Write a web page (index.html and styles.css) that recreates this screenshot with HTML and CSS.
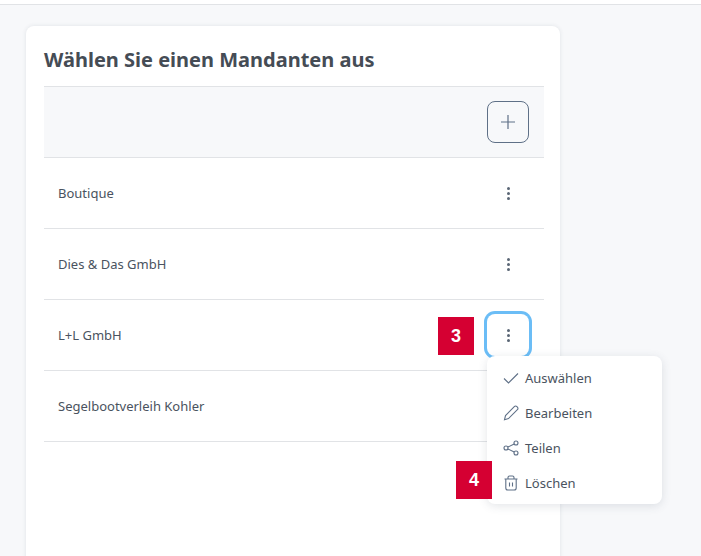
FILE: index.html
```html
<!DOCTYPE html>
<html>

<head>
    <title>Mandanten</title>
    <link rel="stylesheet" href="styles.css">
</head>

<body>
    <div class="topbar"></div>

    <div class="content">
        <div class="card">
            <h2 class="card-title">Wählen Sie einen Mandanten aus</h2>

            <div class="toolbar">
                <button class="add-btn" aria-label="Hinzufügen">
                    <svg width="16" height="16" viewBox="0 0 16 16">
                        <path d="M8 1v14M1 8h14" stroke="#5f7087" stroke-width="1.2" fill="none" />
                    </svg>
                </button>
            </div>

            <div class="row">
                <span>Boutique</span>
                <button class="more-btn" aria-label="Mehr"><i></i><i></i><i></i></button>
            </div>
            <div class="row">
                <span>Dies &amp; Das GmbH</span>
                <button class="more-btn" aria-label="Mehr"><i></i><i></i><i></i></button>
            </div>
            <div class="row row-active">
                <span>L+L GmbH</span>
                <span class="badge badge-3">3</span>
                <button class="more-btn focused" aria-label="Mehr"><i></i><i></i><i></i></button>

                <div class="menu">
                    <div class="menu-item">
                        <svg width="16" height="16" viewBox="0 0 16 16">
                            <path d="M1 8.5l4.5 4.5L15 3.5" stroke="#5f7087" stroke-width="1.1" fill="none" />
                        </svg>
                        Auswählen
                    </div>
                    <div class="menu-item">
                        <svg width="16" height="16" viewBox="0 0 16 16">
                            <path d="M11.3 1.6a1.8 1.8 0 0 1 2.6 0l.5.5a1.8 1.8 0 0 1 0 2.6L5.5 13.6 1.5 14.7l1-4.2z"
                                stroke="#5f7087" stroke-width="1.1" fill="none" />
                        </svg>
                        Bearbeiten
                    </div>
                    <div class="menu-item">
                        <svg width="16" height="16" viewBox="0 0 16 16">
                            <circle cx="3" cy="8" r="2" stroke="#5f7087" stroke-width="1.1" fill="none" />
                            <circle cx="13" cy="3" r="2" stroke="#5f7087" stroke-width="1.1" fill="none" />
                            <circle cx="13" cy="13" r="2" stroke="#5f7087" stroke-width="1.1" fill="none" />
                            <path d="M4.8 7.1l6.4-3.2M4.8 8.9l6.4 3.2" stroke="#5f7087" stroke-width="1.1" fill="none" />
                        </svg>
                        Teilen
                    </div>
                    <div class="menu-item">
                        <svg width="16" height="16" viewBox="0 0 16 16">
                            <path d="M1.5 4h13M5 4V2.5A1.5 1.5 0 0 1 6.500 1h3A1.500 1.500 0 0 1 11 2.500V4M2.800 4v9a2 2 0 0 0 2 2h6.400a2 2 0 0 0 2-2V4M6.500 7.500v4M9.500 7.500v4"
                                stroke="#5f7087" stroke-width="1.1" fill="none" />
                        </svg>
                        Löschen
                    </div>
                    <span class="badge badge-4">4</span>
                </div>
            </div>
            <div class="row">
                <span>Segelbootverleih Kohler</span>
            </div>
        </div>
    </div>
</body>

</html>
```

FILE: styles.css
```css
html,
body {
    height: 100%;
}

body {
    margin: 0;
    overflow: hidden;
    background-color: #f7f8fa;
    color: #4a5360;
    font-family: "Noto Sans", sans-serif;
    font-size: 13px;
}

.topbar {
    height: 4px;
    background-color: #fff;
    border-bottom: 1px solid #e1e3e6;
}

.content {
    padding: 21px 0 0 26px;
}

.card {
    width: 500px;
    height: 560px;
    padding: 0 16px 0 18px;
    background-color: #fff;
    border-radius: 8px 8px 0 0;
    box-shadow: 0 0 4px rgba(60, 70, 90, 0.12);
}

.card-title {
    margin: 0;
    height: 60px;
    line-height: 68px;
    font-size: 20px;
    font-weight: 700;
    color: #454c55;
}

.toolbar {
    display: flex;
    justify-content: flex-end;
    padding: 14px 15px;
    background-color: #f7f8fa;
    border-top: 1px solid #e1e3e6;
    border-bottom: 1px solid #e1e3e6;
}

.add-btn,
.more-btn {
    width: 42px;
    height: 42px;
    padding: 0;
    display: flex;
    align-items: center;
    justify-content: center;
    background: none;
    border-radius: 8px;
    cursor: pointer;
}

.add-btn {
    border: 1px solid #5f7087;
}

.more-btn {
    flex-direction: column;
    gap: 2px;
    border: none;
}

.more-btn i {
    width: 3px;
    height: 3px;
    border-radius: 50%;
    background-color: #5a6675;
}

.more-btn.focused {
    box-shadow: 0 0 0 3px #6bbdf6;
}

.row {
    position: relative;
    display: flex;
    align-items: center;
    justify-content: space-between;
    height: 70px;
    padding: 0 15px 0 14px;
    border-bottom: 1px solid #e1e3e6;
}

.badge {
    position: absolute;
    display: flex;
    align-items: center;
    justify-content: center;
    width: 36px;
    height: 38px;
    background-color: #d50032;
    color: #fff;
    font-family: "Liberation Sans", sans-serif;
    font-size: 18px;
    font-weight: 700;
}

.badge-3 {
    left: 394px;
    top: 17px;
}

.badge-4 {
    left: -31px;
    top: 105px;
}

.menu {
    position: absolute;
    z-index: 2;
    left: 443px;
    top: 56px;
    width: 175px;
    padding: 4px 0;
    background-color: #fff;
    border-radius: 8px;
    box-shadow: 0 2px 10px rgba(60, 70, 90, 0.14);
}

.menu-item {
    display: flex;
    align-items: center;
    gap: 6px;
    height: 35px;
    padding-left: 16px;
    white-space: nowrap;
}

.menu-item svg {
    flex-shrink: 0;
}
```
